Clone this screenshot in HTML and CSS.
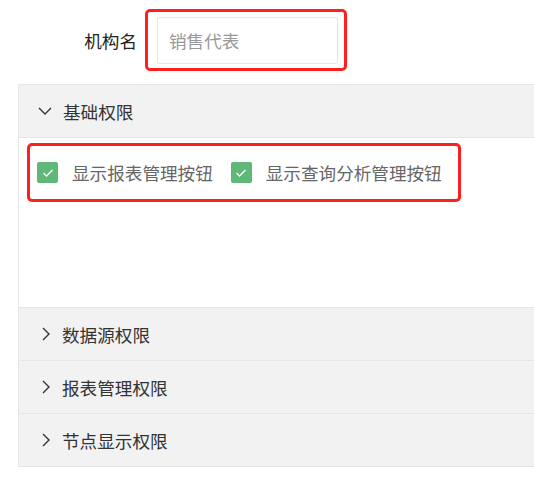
FILE: index.html
```html
<!DOCTYPE html>
<html lang="zh-CN">
<head>
    <meta charset="UTF-8">
    <meta name="viewport" content="width=device-width, initial-scale=1.0">
    <title>机构权限</title>
    <link rel="stylesheet" href="styles.css">
</head>
<body>
    <div class="form-item">
        <label class="form-label">机构名</label>
        <div class="mark">
            <input class="form-input" type="text" placeholder="销售代表">
        </div>
    </div>

    <div class="collapse">
        <div class="colla-item">
            <h2 class="colla-title">
                <svg class="arrow" viewBox="0 0 14 8" width="14" height="8"><path d="M1 1 L7 7 L13 1" fill="none" stroke="#333" stroke-width="1.4"/></svg>
                基础权限
            </h2>
            <div class="colla-content">
                <div class="mark check-row">
                    <div class="checkbox">
                        <span class="box"><svg viewBox="0 0 12 10" width="12" height="10"><path d="M1.5 5 L4.5 8 L10.5 2" fill="none" stroke="#fff" stroke-width="1.3"/></svg></span>
                        <span>显示报表管理按钮</span>
                    </div>
                    <div class="checkbox">
                        <span class="box"><svg viewBox="0 0 12 10" width="12" height="10"><path d="M1.5 5 L4.5 8 L10.5 2" fill="none" stroke="#fff" stroke-width="1.3"/></svg></span>
                        <span>显示查询分析管理按钮</span>
                    </div>
                </div>
            </div>
        </div>
        <div class="colla-item">
            <h2 class="colla-title">
                <svg class="arrow side" viewBox="0 0 8 14" width="8" height="14"><path d="M1 1 L7 7 L1 13" fill="none" stroke="#333" stroke-width="1.4"/></svg>
                数据源权限
            </h2>
        </div>
        <div class="colla-item">
            <h2 class="colla-title">
                <svg class="arrow side" viewBox="0 0 8 14" width="8" height="14"><path d="M1 1 L7 7 L1 13" fill="none" stroke="#333" stroke-width="1.4"/></svg>
                报表管理权限
            </h2>
        </div>
        <div class="colla-item">
            <h2 class="colla-title">
                <svg class="arrow side" viewBox="0 0 8 14" width="8" height="14"><path d="M1 1 L7 7 L1 13" fill="none" stroke="#333" stroke-width="1.4"/></svg>
                节点显示权限
            </h2>
        </div>
    </div>
</body>
</html>
```

FILE: styles.css
```css
* {
    margin: 0;
    padding: 0;
    box-sizing: border-box;
}

body {
    font-family: "Noto Sans CJK SC", "Noto Sans", sans-serif;
    font-size: 17.6px;
    color: #333;
    background: #fff;
    overflow: hidden;
    padding-top: 9px;
}

/* red annotation frame */
.mark {
    border: 3px solid #ff1f1f;
    border-radius: 5px;
}

.form-item {
    display: flex;
    align-items: center;
    height: 62px;
}

.form-label {
    width: 145px;
    padding-right: 8px;
    text-align: right;
    color: #222;
}

.form-input {
    display: block;
    width: 181px;
    height: 47px;
    border: 1px solid #e6e6e6;
    border-radius: 2px;
    padding-left: 11px;
    font-family: inherit;
    font-size: 17.6px;
    color: #333;
    outline: none;
    margin: 5px 6px 4px 9px;
}

.form-input::placeholder {
    color: #999;
}

.collapse {
    margin: 13px 0 0 18px;
    width: 540px;
    border: 1px solid #e6e6e6;
    border-right: none;
}

.colla-item + .colla-item {
    border-top: 1px solid #e6e6e6;
}

.colla-title {
    display: flex;
    align-items: center;
    height: 52px;
    padding-left: 19px;
    background: #f2f2f2;
    font-size: 17.6px;
    font-weight: normal;
    color: #333;
}

.arrow {
    margin-right: 11px;
}

.arrow.side {
    margin-left: 4px;
    margin-right: 12px;
}

.colla-content {
    height: 170px;
    padding: 5px 0 0 8px;
    border-top: 1px solid #e6e6e6;
}

.check-row {
    display: flex;
    align-items: center;
    gap: 18px;
    width: 434px;
    height: 59px;
    padding-left: 7px;
}

.checkbox {
    display: flex;
    align-items: center;
    gap: 14px;
    color: #666;
}

.box {
    display: flex;
    align-items: center;
    justify-content: center;
    width: 21px;
    height: 21px;
    background: #5fb878;
    border-radius: 2px;
}
```
